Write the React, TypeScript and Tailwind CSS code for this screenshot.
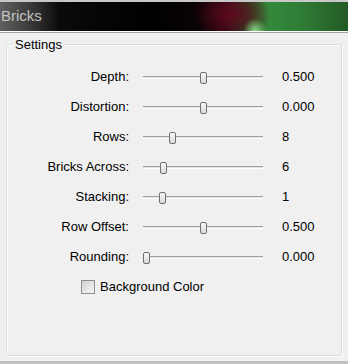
import React from "react";

const rows = [
  { label: "Depth:", value: "0.500", pos: 60 },
  { label: "Distortion:", value: "0.000", pos: 60 },
  { label: "Rows:", value: "8", pos: 29 },
  { label: "Bricks Across:", value: "6", pos: 20 },
  { label: "Stacking:", value: "1", pos: 19 },
  { label: "Row Offset:", value: "0.500", pos: 60 },
  { label: "Rounding:", value: "0.000", pos: 3 },
];

function Slider({ pos }: { pos: number }) {
  return (
    <div className="relative w-[120px] h-[13px] flex items-center">
      <div className="w-full h-[3px] border-t border-[#a0a0a0] border-b border-b-white bg-[#e3e3e3]" />
      <div
        className="absolute top-[1px] w-[7px] h-[12px] rounded-[2px] border border-[#707070] bg-gradient-to-b from-[#fafafa] to-[#d8d8d8]"
        style={{ left: pos - 3 }}
      />
    </div>
  );
}

export default function App() {
  return (
    <div className="w-[348px] h-[364px] bg-[#f0f0f0] flex flex-col overflow-hidden" style={{ fontFamily: '"Liberation Sans", Arial, sans-serif' }}>
      <div className="h-[2px] bg-[#c8c8c8]" />
      <div
        className="relative h-[29px] flex items-center pl-[1px] text-[15px] text-[#c4c4c4]"
        style={{
          background:
            "radial-gradient(ellipse 12px 14px at 255px 30px, rgba(150,230,150,0.95), transparent), radial-gradient(ellipse 40px 26px at 232px 12px, rgba(100,10,30,0.9), transparent), linear-gradient(90deg, #606060 0px, #3a3a3a 30px, #0a0a0a 60px, #000 150px, #0a0305 200px, #2a0610 225px, #2c4a24 250px, #348a3c 268px, #2f7d36 300px, #245a24 348px)",
        }}
      >
        Bricks
      </div>
      <div className="h-[1px] bg-white" />
      <div className="h-[1px] bg-[#a0a0a0]" />
      <div className="flex-1 relative px-[6px] pt-[11px] pb-[5px]">
        <div className="h-full border border-[#d5dfe5] shadow-[inset_1px_1px_0_#fff,1px_1px_0_#fff] rounded-[2px] relative">
          <div className="absolute -top-[8px] left-[6px] bg-[#f0f0f0] px-[2px] text-[13px] leading-[15px] text-black">Settings</div>
          <div className="flex flex-col pt-[17px] text-[13px] text-black">
            {rows.map((r) => (
              <div key={r.label} className="flex items-center h-[30px]">
                <div className="w-[122px] text-right">{r.label}</div>
                <div className="ml-[14px]">
                  <Slider pos={r.pos} />
                </div>
                <div className="ml-[19px]">{r.value}</div>
              </div>
            ))}
            <div className="flex items-center h-[30px] pl-[74px]">
              <div className="w-[14px] h-[14px] border border-[#8e8f8f] bg-gradient-to-br from-[#d0d0d0] to-[#f8f8f8]" />
              <span className="ml-[5px]">Background Color</span>
            </div>
          </div>
        </div>
      </div>
      <div className="h-[3px] bg-[#c0c0c0]" />
    </div>
  );
}
